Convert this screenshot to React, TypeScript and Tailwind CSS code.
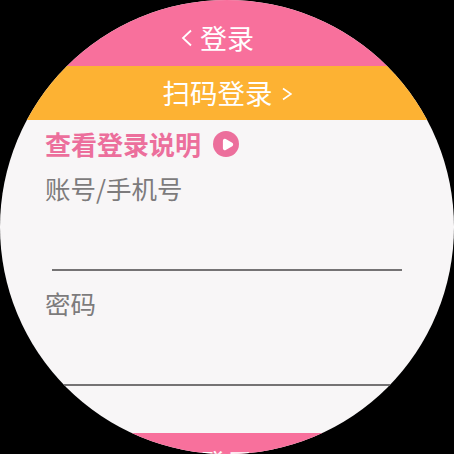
import { Play } from 'lucide-react';

const font = { fontFamily: '"Noto Sans CJK SC", "Noto Sans", sans-serif' };

function Field({ label, gap }: { label: string; gap: string }) {
  return (
    <div className="flex flex-col">
      <div className="pl-[45px] text-[25.5px] leading-[36px] text-[#7d7b7c]">{label}</div>
      <div className={`${gap} ml-[52px] mr-[52px] h-[2px] bg-[#757374]`} />
    </div>
  );
}

export default function App() {
  return (
    <div className="w-[454px] h-[454px] bg-black">
      <div className="w-[454px] h-[454px] rounded-full overflow-hidden flex flex-col bg-[#f8f6f7]" style={font}>
        <div className="h-[66px] shrink-0 bg-[#f8709c] flex items-end justify-center pb-[9px] pr-[19px] text-white">
          <span className="flex items-center gap-[8px] text-[27px] leading-[38px]">
            <svg width="11" height="18" viewBox="0 0 11 18" fill="none" stroke="currentColor" strokeWidth="1.8">
              <path d="M10 1.5 L2 9 L10 16.5" />
            </svg>
            登录
          </span>
        </div>
        <div className="h-[54px] shrink-0 bg-[#fdb233] flex items-center justify-center text-white pb-[2px]">
          <span className="flex items-center gap-[9px] text-[27.5px] leading-[38px]">
            扫码登录
            <svg width="10" height="14" viewBox="0 0 10 14" fill="none" stroke="currentColor" strokeWidth="1.6" className="mt-[3px]">
              <path d="M1 1.5 L9 7 L1 12.5" />
            </svg>
          </span>
        </div>
        <div className="flex-1 flex flex-col">
          <div className="pl-[45px] pt-[6px] flex items-center gap-[12px] text-[#ec6f9c]">
            <span className="text-[26px] leading-[36px] font-bold">查看登录说明</span>
            <span className="w-[26px] h-[26px] rounded-full bg-[#ec6f9c] flex items-center justify-center">
              <Play size={13} className="text-white fill-white ml-[2px]" strokeWidth={3} />
            </span>
          </div>
          <div className="mt-[8px]">
            <Field label="账号/手机号" gap="mt-[63px]" />
          </div>
          <div className="mt-[14px]">
            <Field label="密码" gap="mt-[63px]" />
          </div>
        </div>
        <div className="h-[21px] shrink-0 bg-[#f8709c] flex justify-center text-white">
          <span className="text-[27px] leading-[38px] mt-[11px]">登录</span>
        </div>
      </div>
    </div>
  );
}
